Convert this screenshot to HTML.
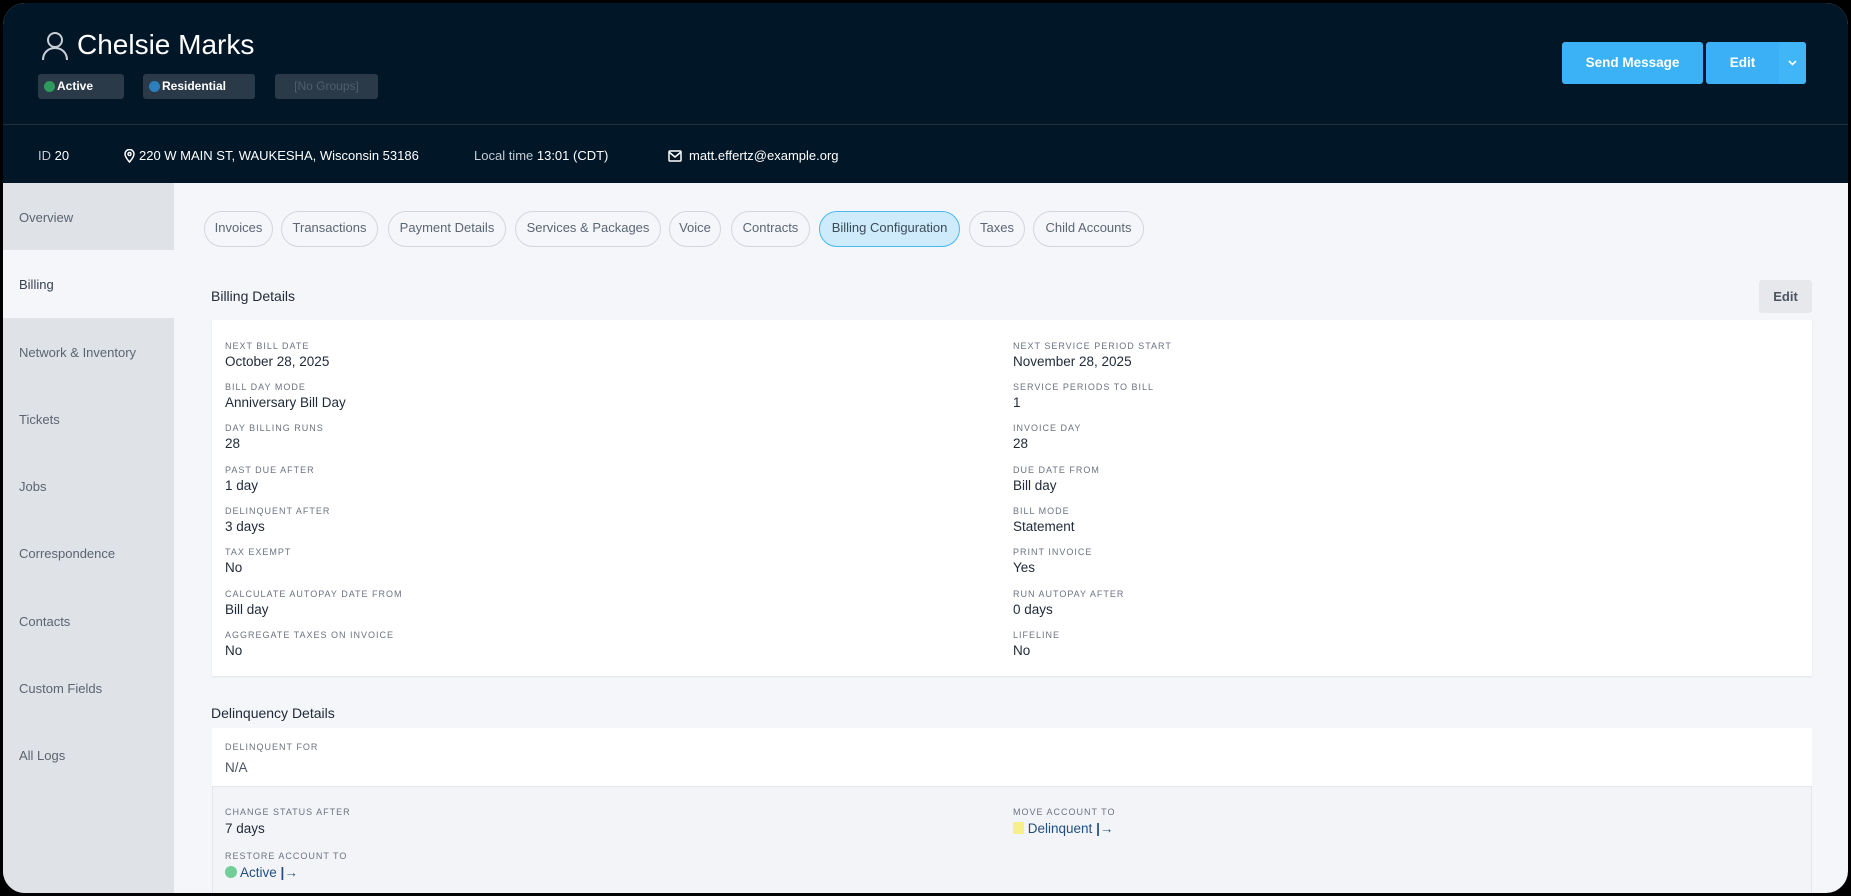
<!DOCTYPE html>
<html><head><meta charset="utf-8"><style>
*{box-sizing:border-box;margin:0;padding:0}
html,body{width:1851px;height:896px;overflow:hidden;background:#000;font-family:"Liberation Sans",sans-serif}
#frame{position:absolute;left:3px;top:3px;width:1845px;height:890px;border-radius:22px;overflow:hidden;background:#f4f6f9}
.a{position:absolute;white-space:nowrap}
#hdr{position:absolute;left:0;top:0;width:1845px;height:180px;background:#011627}
.badge{position:absolute;top:71px;height:25px;border-radius:3px;background:#2b3a48;color:#fff;font-size:12px;font-weight:bold;line-height:25px;padding-left:19px}
.dot{position:absolute;left:6px;top:7px;width:11px;height:11px;border-radius:50%}
.nav{top:144px;font-size:13px;color:#fff;line-height:18px}
.side{position:absolute;left:0;top:180px;width:171px;height:710px;background:#dfe2e7}
.si{position:absolute;left:16px;font-size:13px;color:#5b6472}
.tab{position:absolute;top:208px;height:36px;border:1px solid #d3d7dd;border-radius:18px;font-size:13px;color:#5b6675;line-height:32px;text-align:center}
.lbl{position:absolute;font-size:9px;letter-spacing:1px;color:#6b7280;white-space:nowrap}
.val{position:absolute;font-size:13.5px;color:#1f2937;white-space:nowrap}
</style></head><body><div id="frame">
<div id="hdr">
<svg class="a" style="left:38px;top:28px" width="28" height="30" viewBox="0 0 28 30" fill="none" stroke="#c8ced6" stroke-width="2"><circle cx="14" cy="9" r="7"/><path d="M2 29c0-7 5-12 12-12s12 5 12 12"/></svg>
<div class="a" style="left:74px;top:26px;font-size:28px;color:#fff">Chelsie Marks</div>
<div class="badge" style="left:35px;width:86px"><span class="dot" style="background:#2e9a5c"></span>Active</div>
<div class="badge" style="left:140px;width:112px"><span class="dot" style="background:#2c7fbd"></span>Residential</div>
<div class="badge" style="left:272px;width:103px;color:#4f5e6c;font-weight:normal;padding-left:0;text-align:center">[No Groups]</div>
<div class="a" style="left:0;top:121px;width:1845px;height:1px;background:#1f2f3e"></div>
<div class="a nav" style="left:35px"><span style="color:#c5ccd4">ID</span> 20</div>
<svg class="a" style="left:121px;top:146px" width="11" height="14" viewBox="0 0 11 14" fill="none" stroke="#fff" stroke-width="1.5"><path d="M5.5 13C2 9 1 7 1 5a4.5 4.5 0 0 1 9 0c0 2-1 4-4.5 8z"/><circle cx="5.5" cy="5" r="1.5"/></svg>
<div class="a nav" style="left:136px">220 W MAIN ST, WAUKESHA, Wisconsin 53186</div>
<div class="a nav" style="left:471px"><span style="color:#c5ccd4">Local time</span> 13:01 (CDT)</div>
<svg class="a" style="left:665px;top:147px" width="14" height="12" viewBox="0 0 14 12" fill="none" stroke="#fff" stroke-width="1.5"><rect x="1" y="1" width="12" height="10" rx="1"/><path d="M1 2l6 5 6-5"/></svg>
<div class="a nav" style="left:686px">matt.effertz@example.org</div>
<div class="a" style="left:1559px;top:39px;width:141px;height:42px;border-radius:3px;background:#3bb2f6;color:#fff;font-size:13.5px;font-weight:bold;line-height:42px;text-align:center">Send Message</div>
<div class="a" style="left:1703px;top:39px;width:100px;height:42px;border-radius:3px;background:#3bb0f6;color:#fff;font-size:13.5px;font-weight:bold;line-height:42px;overflow:hidden"><span style="position:absolute;left:0;width:73px;text-align:center">Edit</span><span style="position:absolute;left:73px;top:0;width:27px;height:42px;background:#40b5f8"></span><svg style="position:absolute;left:82px;top:18px" width="9" height="6" viewBox="0 0 9 6" fill="none" stroke="#fff" stroke-width="1.6"><path d="M1 1l3.5 3.5L8 1"/></svg></div>
</div>
<div class="side">
<div class="a" style="left:0;top:67px;width:171px;height:68px;background:#f4f6f9"></div>
<div class="si" style="top:27px">Overview</div>
<div class="si" style="top:94px;color:#374151">Billing</div>
<div class="si" style="top:162px">Network &amp; Inventory</div>
<div class="si" style="top:229px">Tickets</div>
<div class="si" style="top:296px">Jobs</div>
<div class="si" style="top:363px">Correspondence</div>
<div class="si" style="top:431px">Contacts</div>
<div class="si" style="top:498px">Custom Fields</div>
<div class="si" style="top:565px">All Logs</div>
</div>
<div class="tab" style="left:201px;width:69px">Invoices</div>
<div class="tab" style="left:278px;width:97px">Transactions</div>
<div class="tab" style="left:385px;width:118px">Payment Details</div>
<div class="tab" style="left:512px;width:146px">Services &amp; Packages</div>
<div class="tab" style="left:666px;width:52px">Voice</div>
<div class="tab" style="left:728px;width:79px">Contracts</div>
<div class="tab" style="left:816px;width:141px;background:#cdebfa;border-color:#47b8f2;color:#3d4a5a">Billing Configuration</div>
<div class="tab" style="left:966px;width:56px">Taxes</div>
<div class="tab" style="left:1030px;width:111px">Child Accounts</div>
<div class="a" style="left:208px;top:285px;font-size:14px;color:#1f2937">Billing Details</div>
<div class="a" style="left:1756px;top:277px;width:53px;height:33px;border-radius:3px;background:#e6e8ec;color:#4b5563;font-size:13px;font-weight:bold;line-height:33px;text-align:center">Edit</div>
<div class="a" style="left:209px;top:317px;width:1600px;height:356px;background:#fff;box-shadow:0 1px 2px rgba(0,0,0,.08)"></div>
<div class="lbl" style="left:222px;top:338px">NEXT BILL DATE</div><div class="val" style="left:222px;top:351px">October 28, 2025</div>
<div class="lbl" style="left:222px;top:379px">BILL DAY MODE</div><div class="val" style="left:222px;top:392px">Anniversary Bill Day</div>
<div class="lbl" style="left:222px;top:420px">DAY BILLING RUNS</div><div class="val" style="left:222px;top:433px">28</div>
<div class="lbl" style="left:222px;top:462px">PAST DUE AFTER</div><div class="val" style="left:222px;top:475px">1 day</div>
<div class="lbl" style="left:222px;top:503px">DELINQUENT AFTER</div><div class="val" style="left:222px;top:516px">3 days</div>
<div class="lbl" style="left:222px;top:544px">TAX EXEMPT</div><div class="val" style="left:222px;top:557px">No</div>
<div class="lbl" style="left:222px;top:586px">CALCULATE AUTOPAY DATE FROM</div><div class="val" style="left:222px;top:599px">Bill day</div>
<div class="lbl" style="left:222px;top:627px">AGGREGATE TAXES ON INVOICE</div><div class="val" style="left:222px;top:640px">No</div>
<div class="lbl" style="left:1010px;top:338px">NEXT SERVICE PERIOD START</div><div class="val" style="left:1010px;top:351px">November 28, 2025</div>
<div class="lbl" style="left:1010px;top:379px">SERVICE PERIODS TO BILL</div><div class="val" style="left:1010px;top:392px">1</div>
<div class="lbl" style="left:1010px;top:420px">INVOICE DAY</div><div class="val" style="left:1010px;top:433px">28</div>
<div class="lbl" style="left:1010px;top:462px">DUE DATE FROM</div><div class="val" style="left:1010px;top:475px">Bill day</div>
<div class="lbl" style="left:1010px;top:503px">BILL MODE</div><div class="val" style="left:1010px;top:516px">Statement</div>
<div class="lbl" style="left:1010px;top:544px">PRINT INVOICE</div><div class="val" style="left:1010px;top:557px">Yes</div>
<div class="lbl" style="left:1010px;top:586px">RUN AUTOPAY AFTER</div><div class="val" style="left:1010px;top:599px">0 days</div>
<div class="lbl" style="left:1010px;top:627px">LIFELINE</div><div class="val" style="left:1010px;top:640px">No</div>
<div class="a" style="left:208px;top:702px;font-size:14px;color:#1f2937">Delinquency Details</div>
<div class="a" style="left:209px;top:725px;width:1600px;height:58px;background:#fff"></div>
<div class="a" style="left:209px;top:783px;width:1600px;height:110px;background:#f3f4f7;border:1px solid #e3e6ea"></div>
<div class="lbl" style="left:222px;top:739px">DELINQUENT FOR</div><div class="val" style="left:222px;top:757px;color:#4b5563">N/A</div>
<div class="lbl" style="left:222px;top:804px">CHANGE STATUS AFTER</div><div class="val" style="left:222px;top:818px">7 days</div>
<div class="lbl" style="left:222px;top:848px">RESTORE ACCOUNT TO</div>
<div class="val" style="left:222px;top:862px;color:#1e4f82"><span style="display:inline-block;width:12px;height:12px;border-radius:50%;background:#6fcf97;vertical-align:-1px"></span> Active <b style="color:#1e4f82">|</b>&#8594;</div>
<div class="lbl" style="left:1010px;top:804px">MOVE ACCOUNT TO</div>
<div class="val" style="left:1010px;top:818px;color:#1e4f82"><span style="display:inline-block;width:11px;height:12px;border-radius:2px;background:#f7ef8a;vertical-align:-1px"></span> Delinquent <b>|</b>&#8594;</div>
</div></body></html>
